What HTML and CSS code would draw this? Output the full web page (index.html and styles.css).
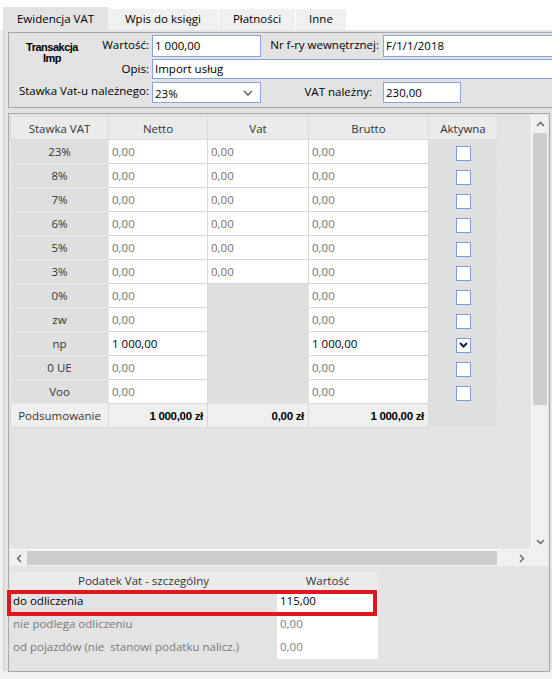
FILE: index.html
```html
<!DOCTYPE html>
<html lang="pl">
<head>
    <meta charset="UTF-8">
    <title>Ewidencja VAT</title>
    <link rel="stylesheet" href="styles.css">
</head>
<body>
    <div class="window">
        <div class="tabs">
            <div class="tab active">Ewidencja VAT</div>
            <div class="tab tab-wpis">Wpis do księgi</div>
            <div class="tab tab-platnosci">Płatności</div>
            <div class="tab tab-inne">Inne</div>
        </div>

        <div class="page">
            <div class="form-box">
                <div class="trans-title">Transakcja<br>Imp</div>
                <div class="lbl lbl-wartosc">Wartość:</div>
                <div class="field f-wartosc">1 000,00</div>
                <div class="lbl lbl-nr">Nr f-ry wewnętrznej:</div>
                <div class="field f-nr">F/1/1/2018</div>
                <div class="lbl lbl-opis">Opis:</div>
                <div class="field f-opis">Import usług</div>
                <div class="lbl lbl-stawka">Stawka Vat-u należnego:</div>
                <div class="field select f-stawka">
                    <span>23%</span>
                    <svg width="10" height="6" viewBox="0 0 10 6"><polyline points="1,1 5,5 9,1" fill="none" stroke="#555" stroke-width="1.3"/></svg>
                </div>
                <div class="lbl lbl-vat">VAT należny:</div>
                <div class="field f-vat">230,00</div>
            </div>

            <div class="grid-box">
                <div class="viewer">
                    <div class="viewer-main">
                        <div class="data">
                            <table class="vat-table">
                                <colgroup>
                                    <col style="width:98px">
                                    <col style="width:99px">
                                    <col style="width:101px">
                                    <col style="width:120px">
                                    <col style="width:69px">
                                </colgroup>
                                <thead>
                                    <tr>
                                        <th>Stawka VAT</th>
                                        <th>Netto</th>
                                        <th>Vat</th>
                                        <th>Brutto</th>
                                        <th>Aktywna</th>
                                    </tr>
                                </thead>
                                <tbody id="rows"></tbody>
                                <tfoot>
                                    <tr>
                                        <td class="sum-label">Podsumowanie</td>
                                        <td class="sum">1 000,00 zł</td>
                                        <td class="sum">0,00 zł</td>
                                        <td class="sum">1 000,00 zł</td>
                                        <td class="off"></td>
                                    </tr>
                                </tfoot>
                            </table>
                        </div>
                        <div class="vscroll">
                            <div class="sb-btn sb-up">
                                <svg width="9" height="6" viewBox="0 0 9 6"><polyline points="1,5 4.5,1.5 8,5" fill="none" stroke="#606060" stroke-width="1.4"/></svg>
                            </div>
                            <div class="vthumb"></div>
                            <div class="vtrack"></div>
                            <div class="sb-btn sb-down">
                                <svg width="9" height="6" viewBox="0 0 9 6"><polyline points="1,1 4.5,4.5 8,1" fill="none" stroke="#606060" stroke-width="1.4"/></svg>
                            </div>
                        </div>
                    </div>
                    <div class="hscroll">
                        <div class="sb-btn sb-left">
                            <svg width="6" height="9" viewBox="0 0 6 9"><polyline points="5,1 1.5,4.5 5,8" fill="none" stroke="#606060" stroke-width="1.4"/></svg>
                        </div>
                        <div class="hthumb"></div>
                        <div class="htrack">
                            <svg width="6" height="9" viewBox="0 0 6 9"><polyline points="1,1 4.5,4.5 1,8" fill="none" stroke="#606060" stroke-width="1.4"/></svg>
                        </div>
                    </div>
                </div>

                <div class="mini">
                    <div class="mini-row mini-head">
                        <div class="mini-label">Podatek Vat - szczególny</div>
                        <div class="mini-value">Wartość</div>
                    </div>
                    <div class="mini-row current">
                        <div class="mini-label">do odliczenia</div>
                        <div class="mini-value">115,00</div>
                    </div>
                    <div class="mini-row">
                        <div class="mini-label">nie podlega odliczeniu</div>
                        <div class="mini-value">0,00</div>
                    </div>
                    <div class="mini-row">
                        <div class="mini-label">od pojazdów (nie&nbsp; stanowi podatku nalicz.)</div>
                        <div class="mini-value">0,00</div>
                    </div>
                    <div class="highlight"></div>
                </div>
            </div>
        </div>
    </div>

    <script>
        const rates = [
            { rate: '23%', netto: '0,00', vat: '0,00', brutto: '0,00' },
            { rate: '8%', netto: '0,00', vat: '0,00', brutto: '0,00' },
            { rate: '7%', netto: '0,00', vat: '0,00', brutto: '0,00' },
            { rate: '6%', netto: '0,00', vat: '0,00', brutto: '0,00' },
            { rate: '5%', netto: '0,00', vat: '0,00', brutto: '0,00' },
            { rate: '3%', netto: '0,00', vat: '0,00', brutto: '0,00' },
            { rate: '0%', netto: '0,00', vat: null, brutto: '0,00' },
            { rate: 'zw', netto: '0,00', vat: null, brutto: '0,00' },
            { rate: 'np', netto: '1 000,00', vat: null, brutto: '1 000,00', active: true },
            { rate: '0 UE', netto: '0,00', vat: null, brutto: '0,00' },
            { rate: 'Voo', netto: '0,00', vat: null, brutto: '0,00' }
        ];

        function valueCell(value) {
            if (value === null) return '<td class="off"></td>';
            const cls = value === '0,00' ? 'val zero' : 'val';
            return `<td class="${cls}">${value}</td>`;
        }

        const tbody = document.getElementById('rows');
        rates.forEach(r => {
            const check = r.active
                ? '<svg width="9" height="6" viewBox="0 0 9 6"><polyline points="1,1 4.5,4.5 8,1" fill="none" stroke="#1c1a5c" stroke-width="2"/></svg>'
                : '';
            const tr = document.createElement('tr');
            tr.innerHTML = `
                <td class="rate">${r.rate}</td>
                ${valueCell(r.netto)}
                ${valueCell(r.vat)}
                ${valueCell(r.brutto)}
                <td class="off"><span class="checkbox">${check}</span></td>
            `;
            tbody.appendChild(tr);
        });
    </script>
</body>
</html>
```

FILE: styles.css
```css
body {
    margin: 0;
    font-family: 'Open Sans', 'Noto Sans', sans-serif;
    font-size: 11.5px;
    color: #000;
}
.window {
    width: 552px;
    height: 679px;
    overflow: hidden;
    background: #f0f0f0;
}
.tabs {
    display: flex;
    height: 23px;
    padding: 7px 0 0 3px;
    background: #fff;
}
.tab {
    height: 21px;
    margin-top: 2px;
    line-height: 20px;
    text-align: center;
    background: #f0f0f0;
    color: #000;
}
.tab.active {
    width: 105px;
    height: 23px;
    margin-top: 0;
    line-height: 23px;
    background: #e3e3e3;
}
.tab-wpis { width: 110px; }
.tab-platnosci { width: 76px; border-left: 1px solid #fff; }
.tab-inne { width: 50px; border-left: 1px solid #fff; }

.page {
    width: 544px;
    height: 639px;
    margin-left: 3px;
    padding: 2px 0 0 4px;
    background: #e3e3e3;
    border-left: 1px solid #cfcfcf;
}

/* top form */
.form-box {
    height: 74px;
    border: 1px solid #a8a8a8;
    border-right: none;
    padding-top: 2px;
    box-sizing: border-box;
    height: 76px;
    display: grid;
    grid-template-columns: 86px 56px 110px 121px 1fr;
    grid-template-rows: 22px 20px 22px;
    row-gap: 2px;
    overflow: hidden;
}
.trans-title {
    grid-column: 1;
    grid-row: 1 / 3;
    padding-top: 7px;
    text-align: center;
    font-family: 'Liberation Sans', Arial, sans-serif;
    font-weight: bold;
    font-size: 11px;
    letter-spacing: -0.5px;
    line-height: 11px;
}
.lbl {
    text-align: right;
    padding-right: 2px;
    line-height: 20px;
    white-space: nowrap;
}
.lbl-wartosc { grid-column: 2; grid-row: 1; }
.lbl-nr { grid-column: 4; grid-row: 1; padding-right: 3px; }
.lbl-opis { grid-column: 2; grid-row: 2; line-height: 20px; }
.lbl-stawka { grid-column: 1 / 3; grid-row: 3; }
.lbl-vat { grid-column: 4; grid-row: 3; padding-right: 10px; line-height: 22px; }

.field {
    background: #fff;
    border: 1px solid #87a5d8;
    padding-left: 2px;
    line-height: 19px;
    margin-left: 1px;
    white-space: nowrap;
}
.f-wartosc { grid-column: 3; grid-row: 1; }
.f-nr { grid-column: 5; grid-row: 1; width: 200px; }
.f-opis { grid-column: 3 / 6; grid-row: 2; line-height: 18px; }
.f-stawka { grid-column: 3; grid-row: 3; margin-top: 1px; }
.f-vat { grid-column: 5; grid-row: 3; width: 74px; margin-top: 1px; line-height: 19px; }
.select {
    display: flex;
    justify-content: space-between;
    align-items: center;
    padding-right: 7px;
}
.select span { padding-top: 2px; }

/* grid */
.grid-box {
    width: 538px;
    height: 555px;
    margin-top: 5px;
    padding: 1px;
    border: 1px solid #a8a8a8;
}
.viewer {
    display: flex;
    flex-direction: column;
    height: 451px;
}
.viewer-main {
    display: flex;
    height: 435px;
}
.data {
    flex: 1;
    padding-top: 2px;
    border-right: 1px solid #fafafa;
    border-bottom: 1px solid #fafafa;
}
.vat-table {
    border-collapse: collapse;
    table-layout: fixed;
    width: 487px;
}
.vat-table th {
    height: 22px;
    padding: 0;
    font-weight: normal;
    color: #333;
    background: #ebebeb;
    border: 1px solid #dadada;
    border-top: none;
}
.vat-table td {
    height: 23px;
    padding: 0 3px;
    border: 1px solid #d8d8d8;
    white-space: nowrap;
}
.vat-table td.rate {
    text-align: center;
    color: #333;
    background: #dfdfdf;
    border-color: #e9e9e9;
}
.vat-table td.val {
    background: #fff;
}
.vat-table td.zero {
    color: #737373;
}
.vat-table td.off {
    background: #dfdfdf;
    text-align: center;
    border-color: #e4e4e4;
}
.checkbox {
    display: inline-flex;
    align-items: center;
    justify-content: center;
    width: 13px;
    height: 13px;
    margin-top: 3px;
    background: #fff;
    border: 1px solid #7d9dd6;
    vertical-align: top;
}
.vat-table td.sum-label {
    text-align: center;
    color: #333;
    background: #efefef;
}
.vat-table td.sum {
    text-align: right;
    padding-right: 4px;
    background: #efefef;
    font-family: 'Liberation Sans', Arial, sans-serif;
    font-weight: bold;
    font-size: 11.5px;
    letter-spacing: -0.3px;
}

.vscroll {
    width: 16px;
    display: flex;
    flex-direction: column;
    background: #f0f0f0;
}
.sb-btn {
    display: flex;
    align-items: center;
    justify-content: center;
    background: #f0f0f0;
}
.sb-up { height: 18px; }
.sb-down { height: 17px; }
.vthumb {
    height: 272px;
    margin: 0 1px;
    background: #cdcdcd;
}
.vtrack { flex: 1; }
.hscroll {
    display: flex;
    height: 16px;
    background: #f0f0f0;
}
.sb-left { width: 17px; }
.hthumb {
    width: 470px;
    margin: 1px 0;
    background: #cdcdcd;
}
.htrack {
    flex: 1;
    display: flex;
    align-items: center;
    padding-left: 22px;
}

/* bottom table */
.mini {
    position: relative;
    width: 368px;
    margin-top: 6px;
}
.mini-row {
    display: flex;
    height: 23px;
    line-height: 22px;
}
.mini-head {
    height: 18px;
    line-height: 18px;
    text-align: center;
    color: #333;
}
.mini-head .mini-label,
.mini-head .mini-value {
    background: #ebebeb;
}
.mini-label {
    width: 264px;
    padding-left: 3px;
    color: #777;
    white-space: nowrap;
}
.mini-value {
    width: 98px;
    padding-left: 3px;
    background: #fff;
    color: #808080;
}
.mini-head .mini-label { padding-left: 0; width: 267px; color: #333; }
.mini-head .mini-value { padding-left: 0; width: 101px; color: #333; }
.current .mini-label,
.current .mini-value {
    color: #000;
}
.highlight {
    position: absolute;
    left: -3px;
    top: 18px;
    width: 370px;
    height: 26px;
    border: 4px solid #e3161f;
    box-sizing: border-box;
}
```
